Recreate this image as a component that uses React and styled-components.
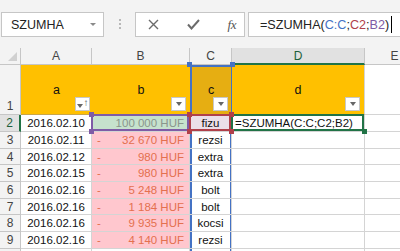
import React from "react";
import styled, { createGlobalStyle, css } from "styled-components";

const GlobalStyle = createGlobalStyle`
  html, body {
    margin: 0;
    padding: 0;
    background: #fff;
    overflow: hidden;
  }
  body {
    font-family: "Liberation Sans", Arial, sans-serif;
  }
`;

const colors = {
  grid: "#d4d4d4",
  head: "#f3f3f3",
  headLine: "#c6c6c6",
  orange: "#ffc000",
  blue: "#4472c4",
  purple: "#7e5ca6",
  red: "#b0404a",
  green: "#217346",
};

const rows = [
  { date: "2016.02.10", amount: "100 000 HUF", cat: "fizu" },
  { date: "2016.02.11", amount: "32 670 HUF", cat: "rezsi" },
  { date: "2016.02.12", amount: "980 HUF", cat: "extra" },
  { date: "2016.02.15", amount: "980 HUF", cat: "extra" },
  { date: "2016.02.16", amount: "5 248 HUF", cat: "bolt" },
  { date: "2016.02.16", amount: "1 184 HUF", cat: "bolt" },
  { date: "2016.02.16", amount: "9 935 HUF", cat: "kocsi" },
  { date: "2016.02.16", amount: "4 140 HUF", cat: "rezsi" },
];

const Page = styled.div`
  width: 400px;
  height: 251px;
  overflow: hidden;
  background: #fff;
`;

const Toolbar = styled.div`
  display: flex;
  align-items: center;
  height: 48px;
  padding-left: 1px;
  background: ${colors.head};
  box-sizing: border-box;
`;

const Box = styled.div`
  height: 25px;
  box-sizing: border-box;
  background: #fff;
  border: 1px solid #c6c6c6;
  display: flex;
  align-items: center;
  margin-top: 1px;
`;

const NameBox = styled(Box)`
  width: 103px;
  padding: 0 7px 0 9px;
  justify-content: space-between;
  font-size: 12.5px;
  color: #222;
`;

const Caret = styled.span`
  width: 0;
  height: 0;
  border-left: 3px solid transparent;
  border-right: 3px solid transparent;
  border-top: 3px solid #8a8a8a;
`;

const Grip = styled.div`
  width: 31px;
  display: flex;
  flex-direction: column;
  align-items: center;
  gap: 2px;

  span {
    width: 2px;
    height: 2px;
    background: #b8b8b8;
  }
`;

const ButtonsBox = styled(Box)`
  width: 110px;
  padding: 0 6px 0 12px;
  justify-content: space-between;
`;

const Fx = styled.span`
  font-family: "Liberation Serif", "Times New Roman", serif;
  font-style: italic;
  font-size: 13px;
  color: #555;
  letter-spacing: -0.5px;
  margin-right: 2px;
`;

const FormulaBox = styled(Box)`
  flex: 1;
  margin-left: 3px;
  margin-right: -2px;
  padding-left: 11px;
  font-size: 12.6px;
  color: #222;
`;

const Ref = styled.span`
  color: ${(p) => p.$c};
`;

const TextCaret = styled.span`
  display: inline-block;
  width: 1px;
  height: 17px;
  background: #000;
  margin-left: 2px;
`;

const Sheet = styled.div`
  display: grid;
  grid-template-columns: 21px 71px 98px 42px 133px 60px;
  grid-template-rows: 17px 50px 17px repeat(7, 16.7px) 20px;
  font-size: 11.5px;
  color: #111;
`;

const Corner = styled.div`
  background: ${colors.head};
  border-right: 1px solid ${colors.headLine};
  border-bottom: 1px solid ${colors.headLine};
  box-sizing: border-box;
  display: flex;
  align-items: flex-end;
  justify-content: flex-end;
  padding: 0 3px 3px 0;

  span {
    width: 0;
    height: 0;
    border-left: 9px solid transparent;
    border-bottom: 9px solid #d0d0d0;
  }
`;

const ColHead = styled.div`
  background: ${(p) => (p.$active ? "#e1e1e1" : colors.head)};
  border-right: 1px solid ${colors.headLine};
  border-bottom: ${(p) =>
    p.$active ? `2px solid ${colors.green}` : `1px solid ${colors.headLine}`};
  box-sizing: border-box;
  display: flex;
  align-items: center;
  justify-content: center;
  font-size: 12px;
  color: ${(p) => (p.$active ? "#1d5f3a" : "#444")};
  padding-top: ${(p) => (p.$active ? "1px" : "0")};
`;

const RowHead = styled.div`
  background: ${(p) => (p.$active ? "#e1e1e1" : colors.head)};
  border-right: ${(p) =>
    p.$active ? `2px solid ${colors.green}` : `1px solid ${colors.headLine}`};
  border-bottom: 1px solid ${colors.headLine};
  box-sizing: border-box;
  display: flex;
  align-items: ${(p) => (p.$tall ? "flex-end" : "center")};
  justify-content: center;
  padding-bottom: ${(p) => (p.$tall ? "1px" : "0")};
  font-size: 12px;
  color: ${(p) => (p.$active ? "#1d5f3a" : "#444")};
`;

const rangeBox = (c) => css`
  &::after {
    content: "";
    position: absolute;
    inset: -1px 0 0 -1px;
    border: 2px solid ${c};
    pointer-events: none;
  }
`;

const Cell = styled.div`
  position: relative;
  box-sizing: border-box;
  border-right: 1px solid ${colors.grid};
  border-bottom: 1px solid ${colors.grid};
  background: ${(p) => p.$bg || "#fff"};
  color: ${(p) => p.$color || "#111"};
  display: flex;
  align-items: center;
  justify-content: ${(p) => p.$align || "center"};
  padding: 0 ${(p) => (p.$align === "flex-start" ? "3px" : "5px")};
  white-space: nowrap;
  ${(p) =>
    p.$column &&
    css`
      box-shadow: inset 2px 0 ${colors.blue}, inset -1px 0 ${colors.blue};
    `}
  ${(p) => p.$range && rangeBox(p.$range)}
`;

const HeaderCell = styled(Cell)`
  background: ${(p) => p.$bg || colors.orange};
  border-right: ${(p) => (p.$sep ? `1px solid ${colors.grid}` : "none")};
  border-bottom: 1px solid #c9a64a;
  font-size: 12.5px;
  ${(p) =>
    p.$column &&
    css`
      box-shadow: inset 2px 0 ${colors.blue}, inset -1px 0 ${colors.blue},
        inset 0 2px ${colors.blue};
    `}
`;

const Money = styled.div`
  display: flex;
  justify-content: space-between;
  width: 100%;
`;

const FilterBtn = styled.span`
  position: absolute;
  right: ${(p) => (p.$edge ? "4px" : "2px")};
  bottom: 3px;
  width: 15px;
  height: 14px;
  box-sizing: border-box;
  background: #fff;
  border: 1px solid #c8c8c8;
  display: flex;
  align-items: center;
  justify-content: center;
  gap: 1px;
`;

const Tri = styled.span`
  width: 0;
  height: 0;
  border-left: 3.5px solid transparent;
  border-right: 3.5px solid transparent;
  border-top: 4px solid #666;
  margin-top: ${(p) => (p.$low ? "4px" : "0")};
`;

const SortArrow = styled.span`
  font-size: 10px;
  line-height: 10px;
  color: #555;
  margin-top: -2px;
`;

const Handle = styled.span`
  position: absolute;
  width: 5px;
  height: 5px;
  background: ${(p) => p.$c};
  z-index: 2;
  ${(p) => (p.$top ? "top: -3px;" : "bottom: -3px;")}
  ${(p) => (p.$left ? "left: -3px;" : "right: -3px;")}
`;

const Corners = ({ c, only }) =>
  ["tl", "tr", "bl", "br"]
    .filter((k) => !only || only.includes(k))
    .map((k) => (
      <Handle key={k} $c={c} $top={k[0] === "t"} $left={k[1] === "l"} />
    ));

export default function App() {
  return (
    <Page>
      <GlobalStyle />
      <Toolbar>
        <NameBox>
          SZUMHA
          <Caret />
        </NameBox>
        <Grip>
          <span />
          <span />
          <span />
        </Grip>
        <ButtonsBox>
          <svg width="11" height="11" viewBox="0 0 11 11">
            <path d="M1 1 L10 10 M10 1 L1 10" stroke="#6b6b6b" strokeWidth="1.4" />
          </svg>
          <svg width="13" height="11" viewBox="0 0 13 11">
            <path d="M1 5.5 L4.5 9.5 L12 1" stroke="#6b6b6b" strokeWidth="2" fill="none" />
          </svg>
          <Fx>fx</Fx>
        </ButtonsBox>
        <FormulaBox>
          =SZUMHA(<Ref $c={colors.blue}>C:C</Ref>;<Ref $c={colors.red}>C2</Ref>;
          <Ref $c={colors.purple}>B2</Ref>)
          <TextCaret />
        </FormulaBox>
      </Toolbar>

      <Sheet>
        <Corner>
          <span />
        </Corner>
        <ColHead>A</ColHead>
        <ColHead>B</ColHead>
        <ColHead>C</ColHead>
        <ColHead $active>D</ColHead>
        <ColHead>E</ColHead>

        <RowHead $tall>1</RowHead>
        <HeaderCell>
          a
          <FilterBtn>
            <Tri $low />
            <SortArrow>↑</SortArrow>
          </FilterBtn>
        </HeaderCell>
        <HeaderCell>
          b
          <FilterBtn $edge>
            <Tri />
          </FilterBtn>
        </HeaderCell>
        <HeaderCell $bg="#e6ae12" $column>
          c
          <Corners c={colors.blue} only={["tl", "tr"]} />
          <FilterBtn $edge>
            <Tri />
          </FilterBtn>
        </HeaderCell>
        <HeaderCell $sep>
          d
          <FilterBtn $edge>
            <Tri />
          </FilterBtn>
        </HeaderCell>
        <Cell />

        {rows.map((r, i) => {
          const first = i === 0;
          return (
            <React.Fragment key={i}>
              <RowHead $active={first}>{i + 2}</RowHead>
              <Cell>{r.date}</Cell>
              {first ? (
                <Cell $bg="#c6e2cd" $color="#8a968c" $align="flex-end" $range={colors.purple}>
                  {r.amount}
                  <Corners c={colors.purple} />
                </Cell>
              ) : (
                <Cell $bg="#ffc7ce" $color="#e4704f">
                  <Money>
                    <span>-</span>
                    <span>{r.amount}</span>
                  </Money>
                </Cell>
              )}
              {first ? (
                <Cell $bg="#ebdfe8" $range={colors.red}>
                  {r.cat}
                  <Corners c={colors.red} />
                </Cell>
              ) : (
                <Cell $column>{r.cat}</Cell>
              )}
              {first ? (
                <Cell $align="flex-start" $range={colors.green}>
                  =SZUMHA(C:C;C2;B2)
                  <Corners c={colors.green} only={["br"]} />
                </Cell>
              ) : (
                <Cell />
              )}
              <Cell />
            </React.Fragment>
          );
        })}

        <RowHead />
        <Cell />
        <Cell />
        <Cell $column />
        <Cell />
        <Cell />
      </Sheet>
    </Page>
  );
}
